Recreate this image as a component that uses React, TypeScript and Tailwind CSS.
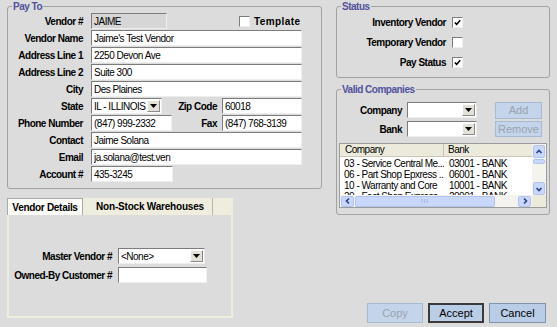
import React from 'react';

const inputBorder =
  'border border-t-[#7c7c7c] border-l-[#7c7c7c] border-b-[#eeeeee] border-r-[#eeeeee]';

function TextBox({ value = '', width, disabled }: { value?: string; width: string; disabled?: boolean }) {
  return (
    <input
      readOnly
      defaultValue={value}
      className={`${width} h-[16px] ${inputBorder} px-[2px] outline-none ${disabled ? 'bg-[#d6d6d6]' : 'bg-white'}`}
    />
  );
}

function Arrow() {
  return (
    <svg width="7" height="4" viewBox="0 0 7 4">
      <polygon points="0,0 7,0 3.5,4" fill="#000" />
    </svg>
  );
}

function Combo({ value = '', width }: { value?: string; width: string }) {
  return (
    <div className={`${width} h-[16px] ${inputBorder} bg-white flex items-center`}>
      <span className="flex-1 pl-[2px] truncate">{value}</span>
      <span className="w-[13px] h-[12px] mr-[1px] bg-[#e3e1d8] border border-t-white border-l-white border-b-[#8a8a8a] border-r-[#8a8a8a] flex items-center justify-center">
        <Arrow />
      </span>
    </div>
  );
}

function CheckBox({ checked }: { checked?: boolean }) {
  return (
    <span className={`w-[11px] h-[11px] ${inputBorder} bg-white flex items-center justify-center`}>
      {checked && (
        <svg width="7" height="7" viewBox="0 0 7 7">
          <path d="M0.8 3.4 L2.6 5.3 L6.3 1.2" stroke="#000" strokeWidth="1.5" fill="none" />
        </svg>
      )}
    </span>
  );
}

function Group({ title, className, children }: { title: string; className: string; children: React.ReactNode }) {
  return (
    <fieldset className={`border border-[#a2a2a2] rounded-[3px] ${className}`}>
      <legend className="ml-[4px] px-[1px] leading-[13px] font-bold text-[#51519c]">{title}</legend>
      {children}
    </fieldset>
  );
}

function Label({ text, width }: { text: string; width: string }) {
  return <span className={`${width} text-right font-bold shrink-0`}>{text}</span>;
}

function Button({ text, disabled, primary }: { text: string; disabled?: boolean; primary?: boolean }) {
  const tone = disabled
    ? 'bg-[#c4d4ea] border-[#a7bad4] text-[#9aa3ae]'
    : primary
      ? 'bg-[#b9cde6] border-[#3a3a3a] text-black'
      : 'bg-[#b9cde6] border-[#7f93ad] text-black';
  return (
    <div className={`h-full w-full border ${primary ? 'border-2' : ''} ${tone} flex items-center justify-center text-[11px] tracking-normal`}>
      {text}
    </div>
  );
}

function Chevron({ dir }: { dir: 'up' | 'down' | 'left' | 'right' }) {
  const d = {
    up: 'M1.5 5 L4 2.5 L6.5 5',
    down: 'M1.5 3 L4 5.5 L6.5 3',
    left: 'M5 1.5 L2.5 4 L5 6.5',
    right: 'M3 1.5 L5.5 4 L3 6.5',
  }[dir];
  return (
    <svg width="8" height="8" viewBox="0 0 8 8">
      <path d={d} stroke="#2b3f8c" strokeWidth="1.6" fill="none" />
    </svg>
  );
}

const scrollBtn = 'bg-[#c8d7fb] border border-[#b0c4ef] rounded-[2px] flex items-center justify-center';

const companies = [
  ['03 - Service Central Me...', '03001 - BANK'],
  ['06 - Part Shop Epxress ...', '06001 - BANK'],
  ['10 - Warranty and Core', '10001 - BANK'],
  ['20 - Fast Shop Express', '20001 - BANK'],
];

function CompanyList() {
  return (
    <div className="ml-[2px] mt-[6px] w-[208px] h-[65px] border border-[#9c9c9c] bg-white flex">
      <div className="w-[193px] flex flex-col">
        <div className="h-[13px] bg-[#ebeadb] border-b border-[#cbc7b8] flex">
          <span className="w-[104px] pl-[5px] leading-[12px] border-r border-[#c5c2b2]">Company</span>
          <span className="flex-1 pl-[4px] leading-[12px]">Bank</span>
        </div>
        <div className="flex-1 overflow-hidden pt-[1px]">
          {companies.map(([c, b]) => (
            <div key={c} className="h-[11px] flex leading-[11px]">
              <span className="w-[104px] pl-[4px] whitespace-nowrap overflow-hidden">{c}</span>
              <span className="flex-1 pl-[5px] whitespace-nowrap">{b}</span>
            </div>
          ))}
        </div>
        <div className="h-[12px] bg-[#f4f3ee] flex items-center px-[1px] gap-[1px]">
          <span className={`w-[13px] h-[11px] ${scrollBtn}`}><Chevron dir="left" /></span>
          <span className="w-[140px] h-[11px] bg-[#c8d7fb] border border-[#b0c4ef] rounded-[2px] flex items-center justify-center text-[6px] text-[#8ea4d8] tracking-[1px]">III</span>
          <span className="flex-1" />
          <span className={`w-[13px] h-[11px] ${scrollBtn}`}><Chevron dir="right" /></span>
        </div>
      </div>
      <div className="w-[14px] flex flex-col bg-[#f4f3ee]">
        <span className={`h-[13px] mx-[1px] mt-[1px] ${scrollBtn}`}><Chevron dir="up" /></span>
        <span className="h-[5px] mx-[1px] mt-[1px] bg-[#c8d7fb] border border-[#b0c4ef] rounded-[2px]" />
        <span className="flex-1" />
        <span className={`h-[13px] mx-[1px] ${scrollBtn}`}><Chevron dir="down" /></span>
        <span className="h-[12px] bg-[#ebeadb]" />
      </div>
    </div>
  );
}

export default function App() {
  return (
    <div className="w-[557px] h-[327px] bg-[#dcdcdc] flex pl-[7px] gap-[14px] font-['Liberation_Sans',sans-serif] text-[10px] tracking-[-0.5px] text-black overflow-hidden">
      {/* Left column */}
      <div className="w-[315px] flex flex-col">
        <Group title="Pay To" className="h-[189px]">
          <div className="flex flex-col gap-[1px]">
            <div className="flex items-center h-[16px]">
              <Label text="Vendor #" width="w-[75px]" />
              <span className="ml-[8px]"><TextBox value="JAIME" width="w-[76px]" disabled /></span>
              <span className="ml-[72px]"><CheckBox /></span>
              <span className="ml-[4px] font-bold tracking-[0.4px]">Template</span>
            </div>
            <div className="flex items-center h-[16px]">
              <Label text="Vendor Name" width="w-[75px]" />
              <span className="ml-[8px]"><TextBox value="Jaime's Test Vendor" width="w-[211px]" /></span>
            </div>
            <div className="flex items-center h-[16px]">
              <Label text="Address Line 1" width="w-[75px]" />
              <span className="ml-[8px]"><TextBox value="2250 Devon Ave" width="w-[211px]" /></span>
            </div>
            <div className="flex items-center h-[16px]">
              <Label text="Address Line 2" width="w-[75px]" />
              <span className="ml-[8px]"><TextBox value="Suite 300" width="w-[211px]" /></span>
            </div>
            <div className="flex items-center h-[16px]">
              <Label text="City" width="w-[75px]" />
              <span className="ml-[8px]"><TextBox value="Des Plaines" width="w-[211px]" /></span>
            </div>
            <div className="flex items-center h-[16px]">
              <Label text="State" width="w-[75px]" />
              <span className="ml-[8px]"><Combo value="IL - ILLINOIS" width="w-[71px]" /></span>
              <Label text="Zip Code" width="w-[55px]" />
              <span className="ml-[5px]"><TextBox value="60018" width="w-[80px]" /></span>
            </div>
            <div className="flex items-center h-[16px]">
              <Label text="Phone Number" width="w-[75px]" />
              <span className="ml-[8px]"><TextBox value="(847) 999-2332" width="w-[81px]" /></span>
              <Label text="Fax" width="w-[45px]" />
              <span className="ml-[5px]"><TextBox value="(847) 768-3139" width="w-[80px]" /></span>
            </div>
            <div className="flex items-center h-[16px]">
              <Label text="Contact" width="w-[75px]" />
              <span className="ml-[8px]"><TextBox value="Jaime Solana" width="w-[211px]" /></span>
            </div>
            <div className="flex items-center h-[16px]">
              <Label text="Email" width="w-[75px]" />
              <span className="ml-[8px]"><TextBox value="ja.solana@test.ven" width="w-[211px]" /></span>
            </div>
            <div className="flex items-center h-[16px]">
              <Label text="Account #" width="w-[75px]" />
              <span className="ml-[8px]"><TextBox value="435-3245" width="w-[82px]" /></span>
            </div>
          </div>
        </Group>

        {/* Tabs */}
        <div className="mt-[9px] w-[226px] h-[120px] bg-[#efedde] flex flex-col">
          <div className="h-[17px] flex items-end">
            <div className="w-[76px] h-[17px] bg-[#fbfbf7] border border-b-0 border-[#a9a9a9] font-bold tracking-[-0.3px] flex items-center justify-center">
              Vendor Details
            </div>
            <div className="ml-[5px] w-[125px] h-[17px] border-r border-[#bab7a6] font-bold tracking-[-0.2px] flex items-center justify-center">
              Non-Stock Warehouses
            </div>
          </div>
          <div className="flex-1 mx-[2px] mb-[2px] bg-[#dcdcdc] flex flex-col gap-[3px] pt-[33px]">
            <div className="flex items-center h-[16px]">
              <Label text="Master Vendor #" width="w-[103px]" />
              <span className="ml-[6px]"><Combo value="<None>" width="w-[87px]" /></span>
            </div>
            <div className="flex items-center h-[16px]">
              <Label text="Owned-By Customer #" width="w-[103px]" />
              <span className="ml-[6px]"><TextBox width="w-[89px]" /></span>
            </div>
          </div>
        </div>
      </div>

      {/* Right column */}
      <div className="w-[214px] flex flex-col">
        <Group title="Status" className="h-[78px]">
          <div className="flex flex-col gap-[4px] pt-[1px]">
            {[
              ['Inventory Vendor', true],
              ['Temporary Vendor', false],
              ['Pay Status', true],
            ].map(([label, on]) => (
              <div key={label as string} className="flex items-center h-[16px]">
                <Label text={label as string} width="w-[109px]" />
                <span className="ml-[6px]"><CheckBox checked={on as boolean} /></span>
              </div>
            ))}
          </div>
        </Group>

        <Group title="Valid Companies" className="mt-[5px] h-[132px]">
          <div className="flex pt-[6px]">
            <div className="flex flex-col gap-[3px]">
              <div className="flex items-center h-[16px]">
                <Label text="Company" width="w-[65px]" />
                <span className="ml-[5px]"><Combo width="w-[70px]" /></span>
              </div>
              <div className="flex items-center h-[16px]">
                <Label text="Bank" width="w-[65px]" />
                <span className="ml-[5px]"><Combo width="w-[70px]" /></span>
              </div>
            </div>
            <div className="ml-[18px] flex flex-col gap-[2px]">
              <div className="w-[47px] h-[17px]"><Button text="Add" disabled /></div>
              <div className="w-[47px] h-[16px]"><Button text="Remove" disabled /></div>
            </div>
          </div>
          <CompanyList />
        </Group>

        <div className="mt-auto mb-[4px] pr-[4px] flex justify-end gap-[5px] h-[20px]">
          <div className="w-[56px]"><Button text="Copy" disabled /></div>
          <div className="w-[56px]"><Button text="Accept" primary /></div>
          <div className="w-[57px]"><Button text="Cancel" /></div>
        </div>
      </div>
    </div>
  );
}
